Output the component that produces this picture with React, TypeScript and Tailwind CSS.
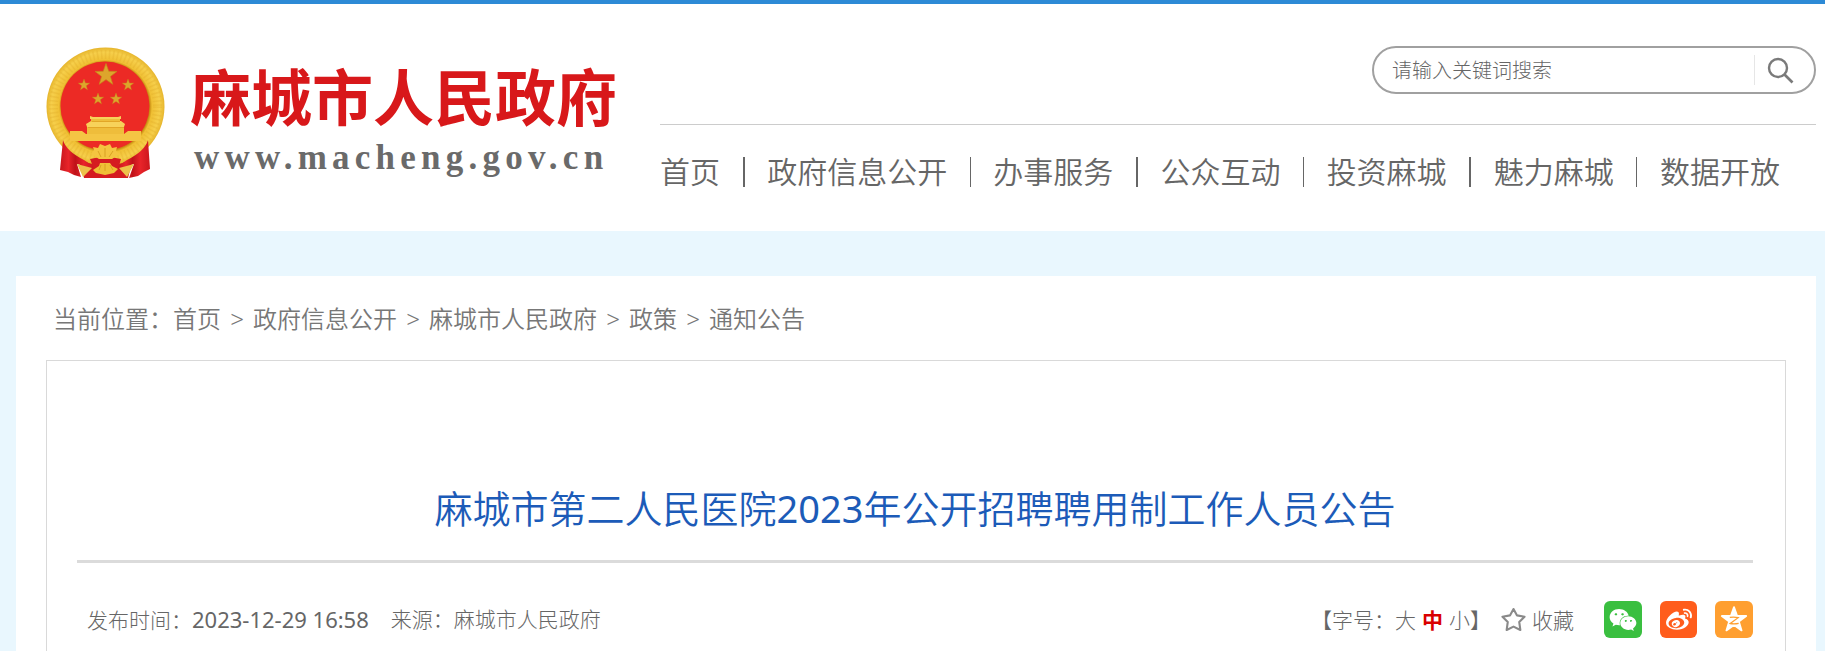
import { FaWeibo, FaWeixin } from 'react-icons/fa';

const NAV = [
	'首页',
	'政府信息公开',
	'办事服务',
	'公众互动',
	'投资麻城',
	'魅力麻城',
	'数据开放',
];

const CRUMBS = ['首页', '政府信息公开', '麻城市人民政府', '政策', '通知公告'];

const STAR =
	'M0 -10 L2.4 -3.2 L9.5 -3.1 L3.8 1.2 L5.9 8.1 L0 4 L-5.9 8.1 L-3.8 1.2 L-9.5 -3.1 L-2.4 -3.2 Z';

const FAT_STAR =
	'M0 -10 L3.2 -4.2 L10 -3 L5.2 1.8 L6.2 9 L0 6 L-6.2 9 L-5.2 1.8 L-10 -3 L-3.2 -4.2 Z';

export default function App() {
	return (
		<div
			lang="zh-CN"
			className="min-h-screen bg-[#e9f7fe] font-['Noto_Sans','Noto_Sans_CJK_SC',sans-serif] font-light text-[#666]">
			<Header />
			<main className="pt-[45px] pr-[9px] pl-4">
				<div className="bg-white px-[30px]">
					<Breadcrumb />
					<Article />
				</div>
			</main>
		</div>
	);
}

function Header() {
	return (
		<header className="flex border-t-4 border-[#2d8ad6] bg-white pr-[9px] pb-9 pl-[46px]">
			<a href="#" className="flex shrink-0 pt-[43px]">
				<Emblem />
				<div className="ml-6 w-[470px] pt-3">
					<div className="text-[61px] leading-[78px] font-bold text-[#d8181a]">
						麻城市人民政府
					</div>
					<div className="pl-1 font-['Liberation_Serif',serif] text-[35px] leading-[42px] font-bold tracking-[0.15em] text-[#6a6a6a]">
						www.macheng.gov.cn
					</div>
				</div>
			</a>
			<div className="min-w-0 flex-1 pt-[42px]">
				<SearchBox />
				<nav className="mt-[30px] flex items-center justify-between border-t border-[#ccc] pt-[25px] pr-9 pb-px">
					{NAV.map((item, i) => (
						<NavItem key={item} label={item} index={i} />
					))}
				</nav>
			</div>
		</header>
	);
}

function NavItem({ label, index }: { label: string; index: number }) {
	return (
		<>
			{index > 0 && (
				<span
					className={
						index % 2 ? 'h-[30px] w-0.5 bg-[#666]' : 'h-[30px] w-px bg-[#666]'
					}
				/>
			)}
			<a
				href="#"
				className="text-[30px] leading-[44px] font-[350] whitespace-nowrap">
				{label}
			</a>
		</>
	);
}

function SearchBox() {
	return (
		<form
			className="ml-auto flex h-12 w-[444px] items-center rounded-full border-2 border-[#a0a0a0] pr-5 pl-[18px]"
			onSubmit={(e) => e.preventDefault()}>
			<input
				type="text"
				aria-label="搜索"
				placeholder="请输入关键词搜索"
				className="h-10 min-w-0 flex-1 text-[20px] outline-none placeholder:text-[#666]"
			/>
			<button
				type="submit"
				aria-label="搜索"
				className="flex h-[30px] items-center border-l border-[#e6e6e6] pl-3">
				<svg width="27" height="27" viewBox="0 0 27 27" fill="none">
					<circle cx="11" cy="11" r="9" stroke="#7a7a7a" strokeWidth="2.4" />
					<path d="M17.5 17.5 L25.5 25.5" stroke="#7a7a7a" strokeWidth="2.6" />
				</svg>
			</button>
		</form>
	);
}

function Breadcrumb() {
	return (
		<div className="flex items-center pt-[25px] pb-[23px] pl-[7px] text-[24px] leading-9 font-[350] text-[#777]">
			<span>当前位置：</span>
			{CRUMBS.map((crumb, i) => (
				<span key={crumb} className="flex">
					{i > 0 && <span className="w-8 text-center">&gt;</span>}
					<a href="#">{crumb}</a>
				</span>
			))}
		</div>
	);
}

function Article() {
	return (
		<article className="min-h-[300px] border border-b-0 border-[#d9d9d9] pr-8 pl-[30px]">
			<h1 className="border-b-[3px] border-[#dbdbdb] pt-[119px] pb-[23px] text-center text-[38px] leading-[57px] font-[350] text-[#1c5bb8]">
				麻城市第二人民医院<span className="font-normal">2023</span>
				年公开招聘聘用制工作人员公告
			</h1>
			<div className="flex items-center justify-between pt-9 pl-[10px] text-[21px] leading-10">
				<div className="flex gap-[22px]">
					<span>
						发布时间：
						<time className="text-[22px] font-normal">2023-12-29 16:58</time>
					</span>
					<span>来源：麻城市人民政府</span>
				</div>
				<div className="flex items-center">
					<span>【字号：</span>
					<button type="button">大</button>
					<button type="button" className="mx-[6px] font-bold text-[#d90000]">
						中
					</button>
					<button type="button">小</button>
					<span>】</span>
					<button type="button" className="ml-[10px] flex items-center gap-[6px]">
						<svg width="25" height="25" viewBox="-12 -12 24 24" fill="none">
							<path
								d={FAT_STAR}
								transform="translate(0 0.5) scale(1.06)"
								stroke="#8a8a8a"
								strokeWidth="1.9"
								strokeLinejoin="round"
							/>
						</svg>
						收藏
					</button>
					<Share />
				</div>
			</div>
		</article>
	);
}

function Share() {
	return (
		<div className="ml-[30px] flex gap-[18px] text-white">
			<a
				href="#"
				aria-label="微信"
				className="flex h-[37px] w-[38px] items-center justify-center rounded-md bg-[#3abf40]">
				<FaWeixin size={28} />
			</a>
			<a
				href="#"
				aria-label="微博"
				className="flex h-[37px] w-[37px] items-center justify-center rounded-md bg-[#ff5d1c]">
				<FaWeibo size={26} />
			</a>
			<a
				href="#"
				aria-label="QQ空间"
				className="flex h-[37px] w-[38px] items-center justify-center rounded-md bg-[#ff9f30]">
				<svg width="28" height="28" viewBox="-12 -12 24 24">
					<path
						d={STAR}
						transform="scale(1.1)"
						fill="#fff"
						stroke="#fff"
						strokeWidth="1.4"
						strokeLinejoin="round"
					/>
					<path
						d="M-3.6 -2.2 Q0 -2.8 3.6 -2 L-3.2 3 Q0 3.7 4 2.9"
						fill="none"
						stroke="#ff9f30"
						strokeWidth="1.1"
					/>
				</svg>
			</a>
		</div>
	);
}

function Emblem() {
	return (
		<svg
			width="120"
			height="133"
			viewBox="16 17 120 133"
			role="img"
			aria-label="国徽">
			<defs>
				<radialGradient id="gold" cx="50%" cy="50%" r="50%">
					<stop offset="75%" stopColor="#c98d12" />
					<stop offset="79%" stopColor="#f0c034" />
					<stop offset="92%" stopColor="#f6cf4b" />
					<stop offset="100%" stopColor="#e6b52c" />
				</radialGradient>
				<linearGradient id="drape" x1="0" y1="0" x2="1" y2="0">
					<stop offset="0%" stopColor="#c8161d" />
					<stop offset="25%" stopColor="#e8242a" />
					<stop offset="45%" stopColor="#bf1219" />
					<stop offset="70%" stopColor="#e8242a" />
					<stop offset="100%" stopColor="#cc171d" />
				</linearGradient>
			</defs>
			<path d="M50 132 H102 L98 148 H54 Z" fill="#d51b20" />
			<circle cx="75.5" cy="76.5" r="59" fill="url(#gold)" />
			<circle
				cx="75.5"
				cy="76.5"
				r="52"
				fill="none"
				stroke="#dca522"
				strokeWidth="9"
				strokeDasharray="1.5 2.5"
				opacity="0.25"
			/>
			<circle cx="75" cy="76" r="44.5" fill="#ec2a25" />
			{/* wall and gate tower */}
			<path
				d="M40 101 H52 L56 104 H94 L98 101 H111 V111 H40 Z"
				fill="#f4c544"
			/>
			<path d="M57 96 H94 V104 H57 Z" fill="#efbd3b" />
			<path d="M56 94 L61 91 H91 L95 94 L94 97 H57 Z" fill="#f7d25a" />
			<path d="M61 87 H90 V92 H61 Z" fill="#efbd3b" />
			<path d="M60 86 L63 87 H88 L91 86 V89 H60 Z" fill="#f7d25a" />
			<path
				d="M62 91.5 H90 M58 97.5 H94"
				stroke="#dc9c20"
				strokeWidth="0.7"
			/>
			<g fill="#dda52c" stroke="#c48a1a" strokeWidth="0.6">
				<path d={STAR} transform="translate(76 45) scale(1.15)" />
				<path d={STAR} transform="translate(54 55) scale(0.6)" />
				<path d={STAR} transform="translate(98 55) scale(0.6)" />
				<path d={STAR} transform="translate(68 69) scale(0.6)" />
				<path d={STAR} transform="translate(86 69) scale(0.6)" />
			</g>
			{/* drapery on both sides of the gear */}
			<path
				d="M33 110 Q36 121 54 130 L63 136 L64 139 L47 134 L51 147 L44 145 L38 142 L30 140 Z"
				fill="url(#drape)"
			/>
			<path
				d="M118 110 Q115 121 97 130 L88 136 L88 139 L104 134 L99 148 L108 146 L114 142 L120 139 Z"
				fill="url(#drape)"
			/>
			<path d="M60 129 Q75 125 91 129 L88 139 H64 Z" fill="#d51b20" />
			<path
				d="M61 124 L64 120 L63 117 L68 118 L70 114 L75 116 L80 114 L82 118 L87 117 L86 121 L90 124 L82 129 H69 Z"
				fill="#f4c440"
			/>
			<path
				d="M66 143 L63 140 L69 136 L70 133 H80 L82 136 L88 139 L84 143 L75 145 Z"
				fill="#f0bf36"
			/>
			<path
				d="M75 127 V118 M71 127 L68 121 M79 127 L83 121 M75 134 V141 M71 135 L69 140 M80 135 L83 140"
				stroke="#d29a1c"
				strokeWidth="0.8"
			/>
			<path
				d="M47 134 L62 138 L53 147 Z M104 134 L89 138 L97 147 Z"
				fill="#edc14a"
			/>
		</svg>
	);
}
